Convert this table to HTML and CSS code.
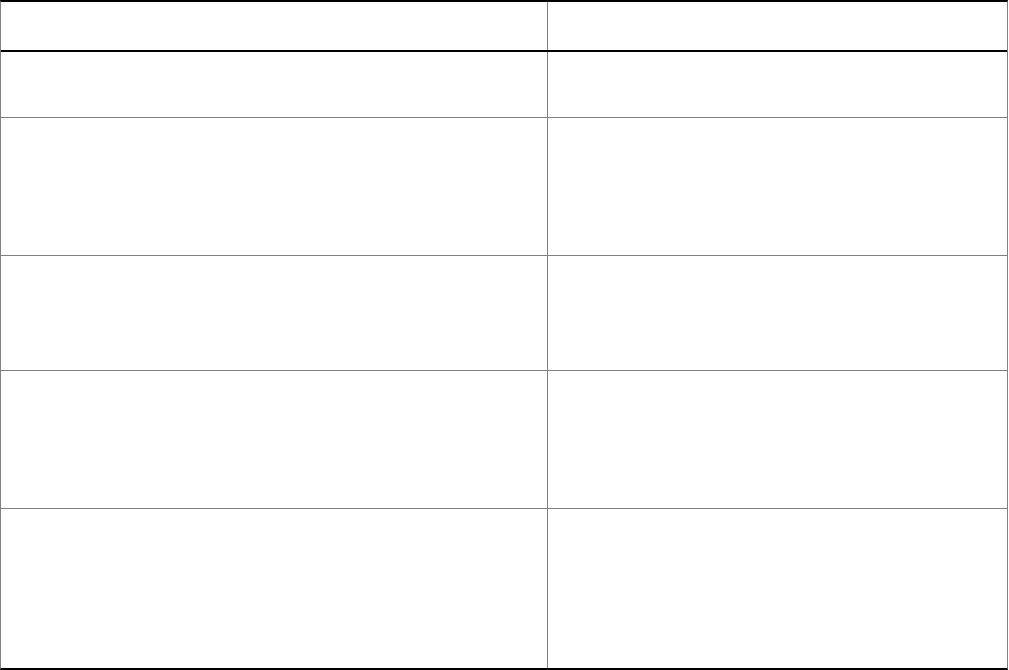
FILE: index.html
```html
<!DOCTYPE html>
<html lang="en">
<head>
<meta charset="utf-8">
<title>Table</title>
<link rel="stylesheet" href="styles.css">
</head>
<body>
<div class="table">
  <div class="row head"><div class="cell c1"></div><div class="cell c2"></div></div>
  <div class="row r1"><div class="cell c1"></div><div class="cell c2"></div></div>
  <div class="row r2"><div class="cell c1"></div><div class="cell c2"></div></div>
  <div class="row r3"><div class="cell c1"></div><div class="cell c2"></div></div>
  <div class="row r4"><div class="cell c1"></div><div class="cell c2"></div></div>
  <div class="row r5"><div class="cell c1"></div><div class="cell c2"></div></div>
</div>
</body>
</html>
```
FILE: styles.css
```css
html, body {
  margin: 0;
  padding: 0;
  background: #ffffff;
  font-family: "Liberation Sans", Arial, sans-serif;
}
.table {
  width: 1008px;
  box-sizing: border-box;
  border-top: 2px solid #000000;
  border-bottom: 2px solid #000000;
  border-left: 1px solid #808080;
  border-right: 1px solid #808080;
  display: flex;
  flex-direction: column;
}
.row {
  display: flex;
  border-bottom: 1px solid #808080;
}
.row.head { height: 48px; border-bottom: 2px solid #000000; }
.row.r1 { height: 65px; }
.row.r2 { height: 137px; }
.row.r3 { height: 114px; }
.row.r4 { height: 137px; }
.row.r5 { height: 159px; border-bottom: none; }
.cell.c1 {
  width: 546px;
  border-right: 1px solid #808080;
}
.cell.c2 {
  flex: 1;
}
```
